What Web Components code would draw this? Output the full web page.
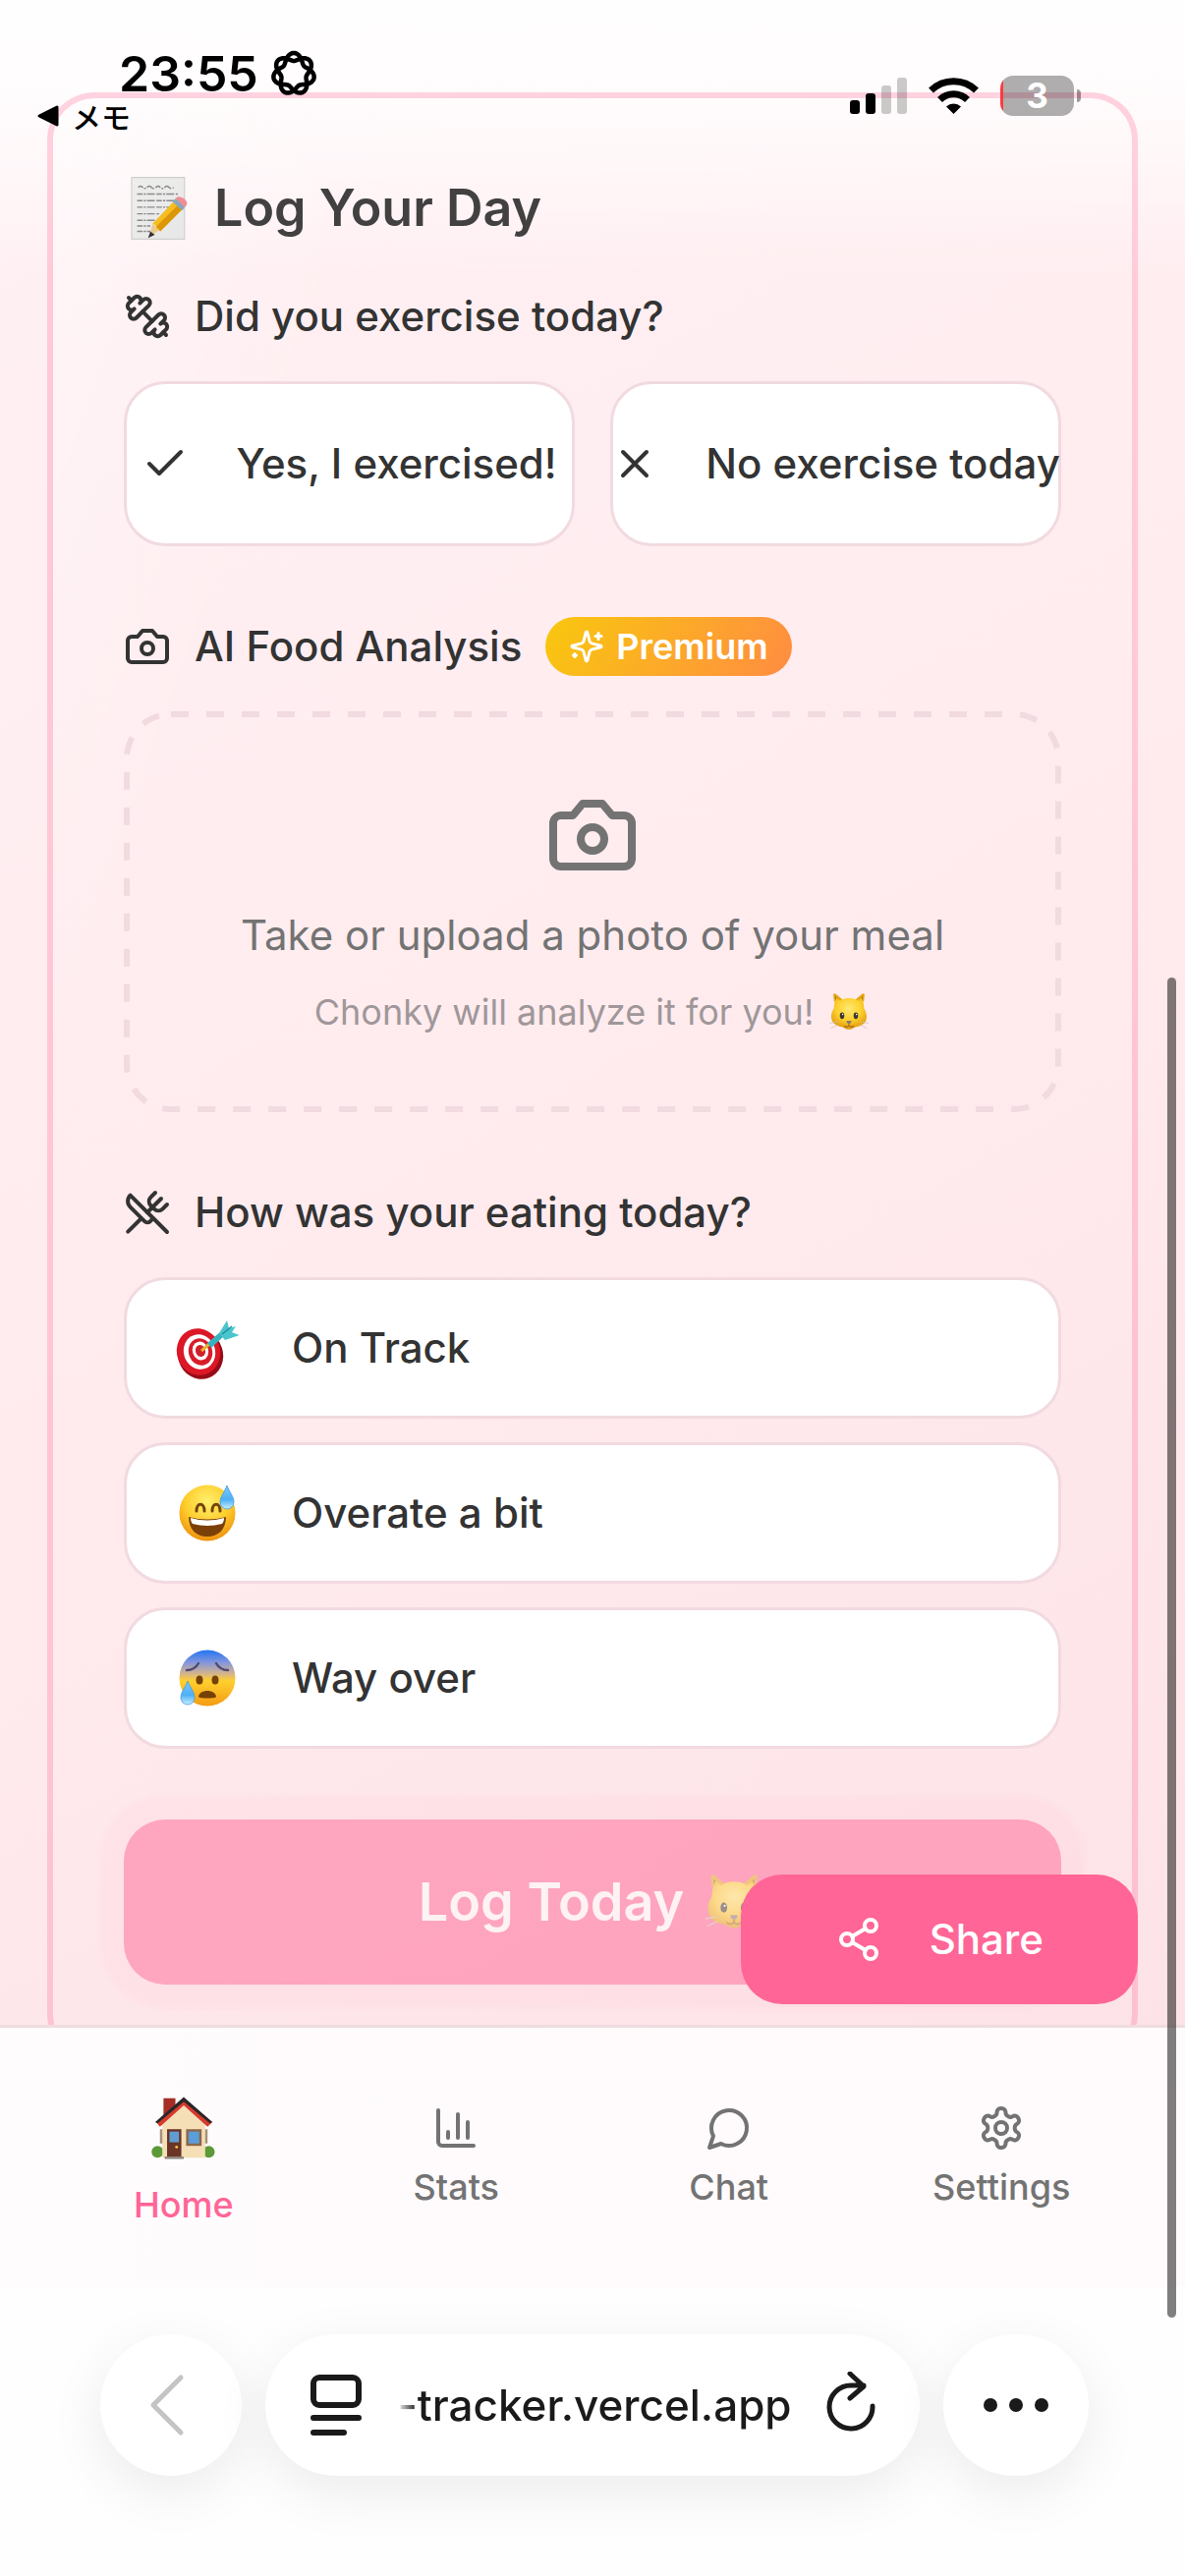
<!DOCTYPE html>
<html lang="en">
<head>
<meta charset="utf-8">
<meta name="viewport" content="width=device-width, initial-scale=1">
<title>Chonky Tracker</title>
<style>
  html, body { margin: 0; height: 100%; }
  body {
    font-family: Inter, "Noto Sans CJK JP", sans-serif;
    color: #333;
    background: #fff;
    --pink: #ff6596;
    --line: #f1dae0;
    --muted: #737373;
    --radius: 42px;
  }
</style>
</head>
<body>
<app-shell>
  <status-bar slot="status"></status-bar>
  <log-card>
    <emoji-art slot="icon" name="memo" style="--size:72px; --art:74px"></emoji-art>
    <span slot="title">Log Your Day</span>
    <field-group icon="dumbbell">
      <span slot="label">Did you exercise today?</span>
      <choice-row>
        <choice-button><ui-icon slot="icon" name="check"></ui-icon>Yes, I exercised!</choice-button>
        <choice-button><ui-icon slot="icon" name="x"></ui-icon>No exercise today</choice-button>
      </choice-row>
    </field-group>
    <field-group icon="camera">
      <span slot="label">AI Food Analysis</span>
      <premium-badge slot="label">Premium</premium-badge>
      <upload-area>
        Take or upload a photo of your meal
        <span slot="hint">Chonky will analyze it for you!</span>
      </upload-area>
    </field-group>
    <field-group icon="utensils">
      <span slot="label">How was your eating today?</span>
      <choice-row stacked>
        <choice-button wide><emoji-art slot="icon" name="target"></emoji-art>On Track</choice-button>
        <choice-button wide><emoji-art slot="icon" name="sweat"></emoji-art>Overate a bit</choice-button>
        <choice-button wide><emoji-art slot="icon" name="anxious"></emoji-art>Way over</choice-button>
      </choice-row>
    </field-group>
    <submit-button>Log Today</submit-button>
  </log-card>
  <share-button slot="float">Share</share-button>
  <tab-bar slot="bars">
    <tab-item current><emoji-art slot="icon" name="house" style="--size:84px; --art:80px"></emoji-art>Home</tab-item>
    <tab-item><ui-icon slot="icon" name="chart"></ui-icon>Stats</tab-item>
    <tab-item><ui-icon slot="icon" name="chat"></ui-icon>Chat</tab-item>
    <tab-item><ui-icon slot="icon" name="gear"></ui-icon>Settings</tab-item>
  </tab-bar>
  <browser-bar slot="bars">-tracker.vercel.app</browser-bar>
</app-shell>

<script>
const define = (name, markup, setup) => {
  const template = document.createElement('template');
  customElements.define(name, class extends HTMLElement {
    constructor() {
      super();
      template.innerHTML ||= markup;
      this.attachShadow({ mode: 'open' }).append(template.content.cloneNode(true));
    }
    connectedCallback() { if (setup) setup(this, this.shadowRoot); }
  });
};

/* Line icons on a 24-unit grid */
const icons = {
  check: '<path d="M20 6 9 17l-5-5"/>',
  x: '<path d="M18 6 6 18M6 6l12 12"/>',
  camera: '<path d="M14.5 4h-5L7 7H4a2 2 0 0 0-2 2v9a2 2 0 0 0 2 2h16a2 2 0 0 0 2-2V9a2 2 0 0 0-2-2h-3l-2.5-3z"/><circle cx="12" cy="13" r="3"/>',
  dumbbell: '<path d="M14.4 14.4 9.6 9.6"/><path d="M18.657 21.485a2 2 0 1 1-2.829-2.828l-1.767 1.768a2 2 0 1 1-2.829-2.829l6.364-6.364a2 2 0 1 1 2.829 2.829l-1.768 1.767a2 2 0 1 1 2.828 2.829z"/><path d="m21.5 21.5-1.4-1.4"/><path d="M3.9 3.9 2.5 2.5"/><path d="M6.404 12.768a2 2 0 1 1-2.829-2.829l1.768-1.767a2 2 0 1 1-2.828-2.829l2.828-2.828a2 2 0 1 1 2.829 2.828l1.767-1.768a2 2 0 1 1 2.829 2.829z"/>',
  utensils: '<path d="m16 2-2.3 2.3a3 3 0 0 0 0 4.2l1.8 1.8a3 3 0 0 0 4.2 0L22 8"/><path d="M15 15 3.3 3.3a4.2 4.2 0 0 0 0 6l7.3 7.3c.7.7 2 .7 2.8 0L15 15Zm0 0 7 7"/><path d="m2.1 21.8 6.4-6.3"/><path d="m19 5-7 7"/>',
  sparkles: '<path d="M9.937 15.5A2 2 0 0 0 8.5 14.063l-6.135-1.582a.5.5 0 0 1 0-.962L8.5 9.936A2 2 0 0 0 9.937 8.5l1.582-6.135a.5.5 0 0 1 .963 0L14.063 8.5A2 2 0 0 0 15.5 9.937l6.135 1.581a.5.5 0 0 1 0 .964L15.5 14.063a2 2 0 0 0-1.437 1.437l-1.582 6.135a.5.5 0 0 1-.963 0z"/><path d="M20 3v4M22 5h-4M4 17v2M5 18H3"/>',
  share: '<circle cx="18" cy="5" r="3"/><circle cx="6" cy="12" r="3"/><circle cx="18" cy="19" r="3"/><path d="m8.59 13.51 6.83 3.98M15.41 6.51l-6.82 3.98"/>',
  chart: '<path d="M3 3v16a2 2 0 0 0 2 2h16M18 17V9M13 17V5M8 17v-3"/>',
  chat: '<path d="M7.9 20A9 9 0 1 0 4 16.1L2 22Z"/>',
  gear: '<path d="M12.22 2h-.44a2 2 0 0 0-2 2v.18a2 2 0 0 1-1 1.73l-.43.25a2 2 0 0 1-2 0l-.15-.08a2 2 0 0 0-2.73.73l-.22.38a2 2 0 0 0 .73 2.73l.15.1a2 2 0 0 1 1 1.72v.51a2 2 0 0 1-1 1.74l-.15.09a2 2 0 0 0-.73 2.73l.22.38a2 2 0 0 0 2.73.73l.15-.08a2 2 0 0 1 2 0l.43.25a2 2 0 0 1 1 1.73V20a2 2 0 0 0 2 2h.44a2 2 0 0 0 2-2v-.18a2 2 0 0 1 1-1.73l.43-.25a2 2 0 0 1 2 0l.15.08a2 2 0 0 0 2.73-.73l.22-.39a2 2 0 0 0-.73-2.73l-.15-.08a2 2 0 0 1-1-1.74v-.5a2 2 0 0 1 1-1.74l.15-.09a2 2 0 0 0 .73-2.73l-.22-.38a2 2 0 0 0-2.73-.73l-.15.08a2 2 0 0 1-2 0l-.43-.25a2 2 0 0 1-1-1.73V4a2 2 0 0 0-2-2z"/><circle cx="12" cy="12" r="3"/>'
};
define('ui-icon', `
  <style>
    :host { display: block; flex: none; width: var(--size, 48px); height: var(--size, 48px); }
    svg { display: block; width: 100%; height: 100%; fill: none; stroke: currentColor; stroke-width: 2; stroke-linecap: round; stroke-linejoin: round; }
  </style>
  <svg viewBox="0 0 24 24" aria-hidden="true"></svg>`,
  (host, root) => { root.querySelector('svg').innerHTML = icons[host.getAttribute('name')] || ''; });

/* Colour pictograms on a 66-unit grid */
const drop = (x, y, s) => `<path transform="translate(${x} ${y}) scale(${s})" d="M0-12C2-6 7-1 7 5A7 7 0 0 1-7 5C-7-1-2-6 0-12Z" fill="url(#drop)" stroke="#3d9be8" stroke-width=".8"/>`;
const dropFill = '<linearGradient id="drop" x2="0" y2="1"><stop stop-color="#7cc8fa"/><stop offset=".6" stop-color="#4fb0f5"/><stop offset="1" stop-color="#c9f0ff"/></linearGradient>';
const pictures = {
  cat: ['Cat face', `
    <defs><radialGradient id="fur" cx=".5" cy=".35" r=".65"><stop stop-color="#ffe873"/><stop offset=".55" stop-color="#fdd02c"/><stop offset="1" stop-color="#e09a0c"/></radialGradient></defs>
    <path d="M8 5c1-2 3-2 5 0l13 11H9Z" fill="#e6a612"/><path d="M58 5c-1-2-3-2-5 0L40 16h17Z" fill="#e6a612"/>
    <path d="M11 8l9 9-9 4Z" fill="#9a6a1c"/><path d="M55 8l-9 9 9 4Z" fill="#9a6a1c"/>
    <path d="M33 11c6 0 10 1 14 4l6-5c3 5 4 12 4 17 3 5 5 10 4 16-1 9-9 13-16 14-3 0-6 4-12 4s-9-4-12-4C14 56 6 52 5 43c-1-6 1-11 4-16 0-5 1-12 4-17l6 5c4-3 8-4 14-4Z" fill="url(#fur)"/>
    <ellipse cx="22" cy="39" rx="3.6" ry="5.4" fill="#3c3733"/><ellipse cx="44" cy="39" rx="3.6" ry="5.4" fill="#3c3733"/>
    <circle cx="23" cy="37" r="1.2" fill="#fff"/><circle cx="45" cy="37" r="1.2" fill="#fff"/>
    <path d="M29 47h8c0 3-2 5-4 5s-4-2-4-5Z" fill="#8b7a72"/>
    <path d="M33 52v3m-8 0c3 3 6 2 8 0 2 2 5 3 8 0" fill="none" stroke="#b06d16" stroke-width="2"/>
    <path d="M2 51l13-2M4 59l11-5M64 51l-13-2M62 59l-11-5" stroke="#cfc2ad" stroke-width="1.2"/>`],
  memo: ['Memo', `
    <defs><linearGradient id="sheet" x2="1" y2="1"><stop stop-color="#eeeeec"/><stop offset="1" stop-color="#e6e7e7"/></linearGradient></defs>
    <path d="M8 5h48v56H8z" fill="url(#sheet)" stroke="#cfcfcd"/>
    <g stroke="#8a8a8c" stroke-width="1.3" fill="none" stroke-dasharray="5 1 2 1 7 1.5">
      <path d="M14 14q2-2 4 0t4 0 4 0 4 0 4 0 4 0 4 0 4 0M13 20h37M13 26h36M13 32h34M13 38h20M13 44h18M13 49h12M13 54h12"/></g>
    <path d="M24 59l3-12 6 6Z" fill="#efc98c"/><path d="M23 60l2-6 4 3Z" fill="#333"/>
    <path d="M27 47l19-20 8 7-20 20c-1-1-2-2-3-2 0-2-1-4-4-5Z" fill="#f5bd20"/>
    <path d="M30 50l20-20 4 4-20 20c-1-2-2-3-4-4Z" fill="#dd9608"/>
    <path d="M45 27l3-3 9 7-3 4Z" fill="#87a9c0"/><path d="M48 24c2-4 12 1 10 6l-2 2Z" fill="#f08d94"/>`],
  target: ['Bullseye', `
    <ellipse cx="27" cy="40" rx="23" ry="25" transform="rotate(-18 27 40)" fill="#960c18"/>
    <ellipse cx="25" cy="37" rx="22" ry="24" transform="rotate(-18 25 37)" fill="#dc1726"/>
    <ellipse cx="26" cy="37" rx="16" ry="18" transform="rotate(-18 26 37)" fill="#fff"/>
    <ellipse cx="27" cy="37" rx="12" ry="14" transform="rotate(-18 27 37)" fill="#d71c29"/>
    <ellipse cx="27" cy="36" rx="8" ry="9.500" transform="rotate(-18 27 36)" fill="#fff"/>
    <ellipse cx="27" cy="36" rx="5" ry="6" transform="rotate(-18 27 36)" fill="#d1202b"/>
    <path d="M28 36l8-7" stroke="#e7b32f" stroke-width="3"/>
    <path d="M34 28l14-12 4 4-14 13Z" fill="#36b3bd"/><path d="M46 18L54 5l2 8 7-2-4 6 8 3-15 5Z" fill="#4bc5cd"/><path d="M49 19l10-8" stroke="#1b8e9c" stroke-width="1.500"/>`],
  sweat: ['Grinning face with sweat', `
    <defs><radialGradient id="skin" cx=".5" cy=".3" r=".72"><stop stop-color="#fff06f"/><stop offset=".55" stop-color="#ffcd2c"/><stop offset="1" stop-color="#ee8d0c"/></radialGradient>${dropFill}</defs>
    <circle cx="34" cy="33" r="28.500" fill="url(#skin)"/>
    <path d="M23 31c0-9 8-9 8 0M39 31c0-9 8-9 8 0" fill="none" stroke="#76430a" stroke-width="3" stroke-linecap="round"/>
    <path d="M15 37q19 5 38 0c0 13-8 20-19 20S15 50 15 37Z" fill="#7b3f08"/>
    <path d="M17 38q17 5 34 0c0 3-1 5-2 6q-15 4-30 0c-1-1-2-3-2-6Z" fill="#fff"/>${drop(54, 17, 1)}`],
  anxious: ['Anxious face with sweat', `
    <defs><linearGradient id="chill" x2="0" y2="1"><stop stop-color="#2374f2"/><stop offset=".22" stop-color="#8296dd"/><stop offset=".42" stop-color="#d4b38c"/><stop offset=".55" stop-color="#ffd02e"/><stop offset="1" stop-color="#f49b13"/></linearGradient>${dropFill}</defs>
    <circle cx="34" cy="33" r="28.500" fill="url(#chill)"/>
    <path d="M13 25q8 0 12-7M55 25q-8 0-12-7" fill="none" stroke="#514a6e" stroke-width="2.500" stroke-linecap="round"/>
    <ellipse cx="26" cy="35" rx="3.500" ry="4.500" fill="#764105"/><ellipse cx="42" cy="35" rx="3.500" ry="4.500" fill="#764105"/>
    <path d="M25 52c1-8 17-8 18 0 0 2-18 2-18 0Z" fill="#764105"/>${drop(14, 48, 1)}`],
  house: ['House', `
    <path d="M16 8h10v18H16z" fill="#a52d25"/>
    <circle cx="11" cy="53" r="5" fill="#5c9a37"/><circle cx="54" cy="53" r="5" fill="#5c9a37"/>
    <path d="M13 34h3v12h-3zM50 34h3v12h-3z" fill="#a5907b"/>
    <path d="M33 11L15 27v31h36V27Z" fill="#f4dfb6"/>
    <path d="M33 8L10 28l3 4 20-18 20 18 4-4Z" fill="#d63a2e"/><path d="M33 7L9 28l2 1L33 11l22 18 2-1Z" fill="#2a2527"/>
    <path d="M19 34h12v23H19z" fill="#6a3426"/><path d="M21 36h8v9h-8z" fill="#5f9ed2"/><circle cx="27" cy="49" r="1.200" fill="#f5c83c"/>
    <path d="M35 34h13v14H35z" fill="#8c6748"/><path d="M37 36h9v10h-9z" fill="#5b9ddb"/>
    <path d="M17 57h16v2H17z" fill="#8b837f"/>`]
};
define('emoji-art', `
  <style>
    :host { display: flex; flex: none; align-items: center; justify-content: center; width: var(--size, 66px); height: var(--size, 66px); }
    svg { display: block; flex: none; width: var(--art, 66px); height: var(--art, 66px); }
  </style>
  <svg viewBox="0 0 66 66" role="img"></svg>`,
  (host, root) => {
    const [label, art] = pictures[host.getAttribute('name')];
    const svg = root.querySelector('svg');
    svg.setAttribute('aria-label', label);
    svg.innerHTML = art;
  });

define('app-shell', `
  <style>
    :host { display: flex; flex-direction: column; height: 100vh; position: relative; overflow: hidden; }
    main {
      flex: 1 1 0; min-height: 0; overflow: hidden; position: relative; padding: 94px 48px 0;
      background:
        linear-gradient(180deg, #fffffff0 0, #ffffffd8 90px, #fff0 280px),
        linear-gradient(150deg, #fff1f4 0%, #ffebee 55%, #fde3e7 100%);
    }
    .status { position: absolute; inset: 0 0 auto; z-index: 2; }
    .float { position: absolute; right: 48px; bottom: 21px; }
    .thumb { position: absolute; right: 9px; top: 995px; bottom: 263px; width: 9px; border-radius: 5px; background: #000; opacity: .5; z-index: 3; }
  </style>
  <div class="status"><slot name="status"></slot></div>
  <main><slot></slot><div class="float"><slot name="float"></slot></div></main>
  <slot name="bars"></slot>
  <div class="thumb"></div>`);

define('status-bar', `
  <style>
    :host { display: flex; justify-content: space-between; align-items: flex-start; padding: 45px 106px 0 36px; color: #000; }
    .left { display: grid; gap: 0; }
    .time { display: flex; align-items: center; gap: 12px; padding-left: 85px; font-size: 50px; font-weight: 600; line-height: 60px; }
    .back { display: flex; align-items: center; gap: 12px; font: 500 30px/26px "Noto Sans CJK JP", sans-serif; color: inherit; text-decoration: none; }
    .right { display: flex; align-items: center; gap: 22px; height: 41px; padding-top: 32px; }
    svg { display: block; }
    .battery { display: flex; align-items: center; gap: 3px; }
    .cell { width: 75px; height: 41px; border-radius: 13px; display: grid; place-items: center; color: #fff; font-size: 35px; line-height: 41px; font-weight: 700; background: linear-gradient(90deg, #ff3b40 3px, #00000050 3px); }
    .tip { width: 4px; height: 13px; border-radius: 0 4px 4px 0; background: #00000060; }
  </style>
  <div class="left">
    <div class="time"><span>23:55</span>
      <svg width="48" height="48" viewBox="-24 -24 48 48" aria-hidden="true"><path class="rosette" fill="none" stroke="#000" stroke-width="4.500"/></svg></div>
    <a class="back" href="#"><svg width="25" height="24" viewBox="0 0 25 24" aria-hidden="true"><path d="M4 12 22 3v18Z" stroke="#000" stroke-width="3" stroke-linejoin="round"/></svg><span>メモ</span></a>
  </div>
  <div class="right">
    <svg width="58" height="37" viewBox="0 0 58 37" aria-label="Signal" role="img"><rect y="23" width="10" height="14" rx="3"/><rect x="16" y="16" width="10" height="21" rx="3"/><g opacity=".2"><rect x="32" y="8" width="10" height="29" rx="3"/><rect x="48" width="10" height="37" rx="3"/></g></svg>
    <svg width="51" height="37" viewBox="0 0 51 37" aria-label="Wi-Fi" role="img"><g fill="none" stroke="#000" stroke-width="7"><path d="M2.500 13a33 33 0 0 1 46 0"/><path d="M11.500 22.500a20 20 0 0 1 28 0"/></g><path d="M18 29.500a11 11 0 0 1 15 0L25.500 37Z"/></svg>
    <div class="battery"><div class="cell">3</div><div class="tip"></div></div>
  </div>`,
  (host, root) => {
    /* seven interlaced petals: one closed curve that goes twice round */
    let d = '';
    for (let i = 0; i <= 280; i++) {
      const t = i / 280 * 4 * Math.PI, r = 17 + 4 * Math.cos(3.5 * t);
      d += (i ? 'L' : 'M') + (r * Math.sin(t)).toFixed(2) + ' ' + (-r * Math.cos(t)).toFixed(2);
    }
    root.querySelector('.rosette').setAttribute('d', d + 'Z');
  });

define('log-card', `
  <style>
    :host { display: flex; flex-direction: column; gap: 72px; box-sizing: border-box; padding: 72px; border: 6px solid #ff659648; border-radius: 48px; background: linear-gradient(110deg, #ffffff60 0, #fff0 22%); }
    h2 { display: flex; align-items: center; gap: 20px; height: 80px; margin: 0 0 -32px; font-size: 52px; line-height: 80px; font-weight: 600; color: #424041; }
  </style>
  <h2><slot name="icon"></slot><slot name="title"></slot></h2>
  <slot></slot>`);

define('field-group', `
  <style>
    :host { display: flex; flex-direction: column; gap: 36px; }
    .label { display: flex; align-items: center; gap: 24px; height: 60px; font-size: 42px; line-height: 60px; font-weight: 500; }
  </style>
  <div class="label"><ui-icon></ui-icon><slot name="label"></slot></div>
  <slot></slot>`,
  (host, root) => {
    const icon = document.createElement('ui-icon');
    icon.setAttribute('name', host.getAttribute('icon'));
    root.querySelector('ui-icon').replaceWith(icon);
  });

define('choice-row', `
  <style>
    :host { display: grid; grid-template-columns: 1fr 1fr; gap: 36px; }
    :host([stacked]) { grid-template-columns: 1fr; gap: 24px; }
  </style>
  <slot></slot>`);

define('choice-button', `
  <style>
    :host { display: block; min-width: 0; }
    button { display: flex; align-items: center; justify-content: center; gap: 48px; box-sizing: border-box; width: 100%; height: 168px; padding: 0; border: 3px solid var(--line); border-radius: var(--radius); background: #fff; color: inherit; font: 500 42px/60px Inter, sans-serif; white-space: nowrap; }
    :host([wide]) button { justify-content: flex-start; gap: 54px; height: 144px; padding: 0 48px; }
  </style>
  <button type="button"><slot name="icon"></slot><span><slot></slot></span></button>`);

define('premium-badge', `
  <style>
    :host { display: flex; align-items: center; gap: 12px; height: 60px; padding: 0 24px; border-radius: 30px; background: linear-gradient(120deg, #f9c80e, #ff8c42); color: #fff; font-size: 36px; line-height: 60px; font-weight: 600; --size: 36px; }
  </style>
  <ui-icon name="sparkles"></ui-icon><slot></slot>`);

define('upload-area', `
  <style>
    :host { display: block; }
    button { position: relative; display: flex; flex-direction: column; align-items: center; gap: 24px; box-sizing: border-box; width: 100%; padding: 78px; border: 0; border-radius: 48px; background: none; color: var(--muted); font: 400 42px/60px Inter, sans-serif; }
    .frame { position: absolute; inset: 0; width: 100%; height: 100%; overflow: visible; }
    .frame rect { width: calc(100% - 6px); height: calc(100% - 6px); fill: none; stroke: var(--line); stroke-width: 6; stroke-dasharray: 18 18; }
    ui-icon { --size: 96px; }
    small { display: flex; align-items: center; gap: 14px; font-size: 36px; line-height: 48px; color: #9f9799; --size: 44px; --art: 42px; }
  </style>
  <button type="button">
    <svg class="frame" aria-hidden="true"><rect x="3" y="3" rx="45"/></svg>
    <ui-icon name="camera"></ui-icon>
    <span><slot></slot></span>
    <small><slot name="hint"></slot><emoji-art name="cat"></emoji-art></small>
  </button>`);

define('submit-button', `
  <style>
    :host { display: block; }
    button { display: flex; align-items: center; justify-content: center; gap: 18px; width: 100%; height: 168px; padding: 0; border: 0; border-radius: var(--radius); background: var(--pink); color: #fff; font: 600 54px/80px Inter, sans-serif; opacity: .5; box-shadow: 0 0 6px 24px #ff659618; --art: 62px; }
  </style>
  <button type="button"><span><slot></slot></span><emoji-art name="cat"></emoji-art></button>`);

define('share-button', `
  <style>
    :host { display: block; }
    button { display: flex; align-items: center; gap: 48px; height: 132px; padding: 0 96px; border: 0; border-radius: var(--radius); background: var(--pink); color: #fff; font: 500 42px/60px Inter, sans-serif; }
  </style>
  <button type="button"><ui-icon name="share"></ui-icon><span><slot></slot></span></button>`);

define('tab-bar', `
  <style>
    :host { display: block; border-top: 3px solid #efdce1; background: linear-gradient(100deg, #fffcfd, #fffafb); }
    nav { display: grid; grid-template-columns: repeat(4, 1fr); align-items: center; padding: 60px 48px; }
  </style>
  <nav><slot></slot></nav>`);

define('tab-item', `
  <style>
    :host { display: block; }
    a { display: flex; flex-direction: column; align-items: center; gap: 12px; color: var(--muted); text-decoration: none; font-size: 36px; line-height: 48px; font-weight: 500; }
    :host([current]) a { color: var(--pink); }
  </style>
  <a href="#"><slot name="icon"></slot><span><slot></slot></span></a>`);

define('browser-bar', `
  <style>
    :host { display: flex; gap: 24px; padding: 48px 98px 102px 102px; background: #fefefe; color: #1a1a1a; }
    button, .pill { height: 144px; border: 0; border-radius: 72px; background: #fff; box-shadow: 0 16px 56px #00000014; padding: 0; color: inherit; }
    .round { flex: none; width: 144px; display: grid; place-items: center; }
    .more { width: 148px; }
    .pill { flex: 1; min-width: 0; display: flex; align-items: center; justify-content: space-between; padding: 0 42px; }
    .pill button { height: auto; background: none; box-shadow: none; border-radius: 0; font: 500 44px/60px Inter, sans-serif; }
    .url { -webkit-mask: linear-gradient(90deg, #0000, #000 20px); mask: linear-gradient(90deg, #0000, #000 20px); }
    svg { display: block; fill: none; stroke: currentColor; stroke-width: 6; stroke-linecap: round; stroke-linejoin: round; }
  </style>
  <button class="round" type="button" aria-label="Back"><svg width="44" height="64" viewBox="0 0 44 64" style="color:#c4c4c4"><path d="M32 4 4 32l28 28" stroke-width="5"/></svg></button>
  <div class="pill">
    <button type="button" aria-label="Page menu"><svg width="60" height="64" viewBox="0 0 60 64"><rect x="7" y="4" width="46" height="28" rx="6"/><path d="M7 45h46M7 60h31"/></svg></button>
    <button class="url" type="button"><slot></slot></button>
    <button type="button" aria-label="Reload"><svg width="56" height="68" viewBox="0 0 56 68"><path d="M50 35A22 22 0 1 1 28 14h13M27 2l14 13-14 12" stroke-width="5"/></svg></button>
  </div>
  <button class="round more" type="button" aria-label="More"><svg width="66" height="14" viewBox="0 0 66 14"><g fill="currentColor" stroke="none"><circle cx="7" cy="7" r="7"/><circle cx="33" cy="7" r="7"/><circle cx="59" cy="7" r="7"/></g></svg></button>`);
</script>
</body>
</html>
